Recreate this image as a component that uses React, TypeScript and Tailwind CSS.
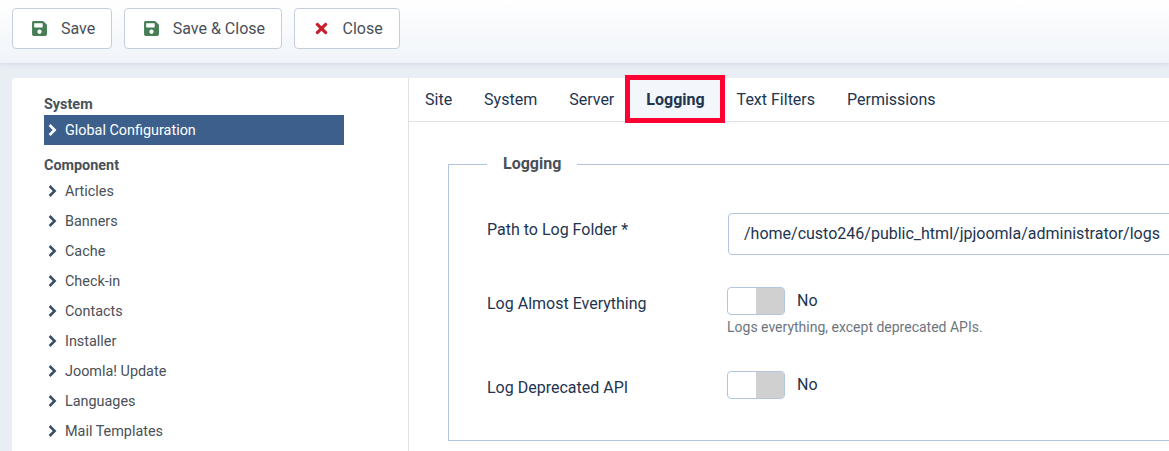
import { FaSave, FaTimes } from "react-icons/fa";

const components = [
  "Articles",
  "Banners",
  "Cache",
  "Check-in",
  "Contacts",
  "Installer",
  "Joomla! Update",
  "Languages",
  "Mail Templates",
];

const tabs = ["Site", "System", "Server", "Logging", "Text Filters", "Permissions"];

function ToolbarButton({ label, icon }: { label: string; icon: React.ReactNode }) {
  return (
    <button className="h-[41px] flex items-center gap-[13px] pl-[18px] pr-[16px] bg-white border border-[#c4cede] rounded-[4px] text-[16px] text-[#495057]">
      {icon}
      <span>{label}</span>
    </button>
  );
}

function Toggle() {
  return (
    <div className="w-[58px] h-[28px] flex border border-[#b2c4de] rounded-[4px] overflow-hidden bg-white">
      <div className="flex-1" />
      <div className="flex-1 bg-[#d0d0d0]" />
    </div>
  );
}

function Chevron({ className }: { className: string }) {
  return (
    <svg viewBox="0 0 10 12" className={"w-[10px] h-[12px] " + className} fill="none" stroke="currentColor" strokeWidth="2.6">
      <polyline points="1.6,1 6.6,6 1.6,11" />
    </svg>
  );
}

function MenuItem({ label, active }: { label: string; active?: boolean }) {
  return (
    <div
      className={
        "h-[30px] w-[300px] flex items-center gap-[7px] pl-[4px] text-[14.4px] " +
        (active ? "bg-[#3c5f8c] text-white" : "text-[#495057]")
      }
    >
      <Chevron className={active ? "text-white" : "text-[#3c4f66]"} />
      <span className="pt-[2px]">{label}</span>
    </div>
  );
}

export default function App() {
  return (
    <div className="h-[451px] overflow-hidden bg-[#e9eef5] font-['Roboto',sans-serif]">
      <div className="h-[63px] flex gap-[11.5px] pl-[12px] pt-[8px] bg-gradient-to-b from-white to-[#f0f4f9] shadow-[0_1px_4px_rgba(130,150,185,0.25)]">
        <ToolbarButton label="Save" icon={<FaSave className="w-[17px] h-[17px] text-[#457d54]" />} />
        <ToolbarButton label="Save & Close" icon={<FaSave className="w-[17px] h-[17px] text-[#457d54]" />} />
        <ToolbarButton label="Close" icon={<FaTimes className="w-[17px] h-[17px] text-[#c81e2b]" />} />
      </div>

      <div className="mt-[15px] ml-[12px] h-[400px] flex bg-white rounded-tl-[4px]">
        <aside className="w-[397px] shrink-0 border-r border-[#dfe3e7] pl-[32px] pt-[17px]">
          <div className="h-[20px] leading-[20px] text-[14.4px] font-bold text-[#495057]">System</div>
          <MenuItem label="Global Configuration" active />
          <div className="mt-[11px] h-[20px] leading-[20px] text-[14.4px] font-bold text-[#495057]">Component</div>
          <div>
            {components.map((c) => (
              <MenuItem key={c} label={c} />
            ))}
          </div>
        </aside>

        <main className="flex-1 min-w-0">
          <div className="relative h-[44px] flex border-b border-[#dfe3e7]">
            {tabs.map((t) => (
              <div
                key={t}
                className={
                  "h-[43px] flex items-center px-[16px] text-[16px] text-[#22344f] " +
                  (t === "Logging" ? "relative font-bold bg-[#f3f6fa]" : "")
                }
              >
                {t}
                {t === "Logging" && (
                  <div className="absolute left-[-5px] right-[-4px] top-[-3px] bottom-[-2px] border-[5px] border-[#ff0033]" />
                )}
              </div>
            ))}
          </div>

          <div className="pl-[39px] pt-[32px]">
            <fieldset className="w-[900px] h-[287px] border border-[#b2c4de] pl-[38px] pr-0">
              <legend className="px-[16px] text-[16px] leading-[20px] font-bold text-[#495057]">Logging</legend>

              <div className="mt-[39px] h-[42px] flex items-start">
                <label className="w-[241px] shrink-0 pt-[7px] text-[16px] leading-[20px] text-[#22344f]">Path to Log Folder *</label>
                <div className="flex-1 h-[42px] flex items-center pl-[15px] border border-[#b2c4de] rounded-[4px] text-[16px] text-[#22344f]">
                  /home/custo246/public_html/jpjoomla/administrator/logs
                </div>
              </div>

              <div className="mt-[32px] flex items-start">
                <label className="w-[240px] shrink-0 pt-[7px] text-[16px] leading-[20px] text-[#22344f]">Log Almost Everything</label>
                <div>
                  <div className="flex items-center gap-[12px]">
                    <Toggle />
                    <span className="text-[16px] text-[#22344f]">No</span>
                  </div>
                  <div className="mt-[2px] text-[14px] leading-[20px] text-[#6d757e]">Logs everything, except deprecated APIs.</div>
                </div>
              </div>

              <div className="mt-[34px] flex items-start">
                <label className="w-[240px] shrink-0 pt-[7px] text-[16px] leading-[20px] text-[#22344f]">Log Deprecated API</label>
                <div className="flex items-center gap-[12px]">
                  <Toggle />
                  <span className="text-[16px] text-[#22344f]">No</span>
                </div>
              </div>
            </fieldset>
          </div>
        </main>
      </div>
    </div>
  );
}
